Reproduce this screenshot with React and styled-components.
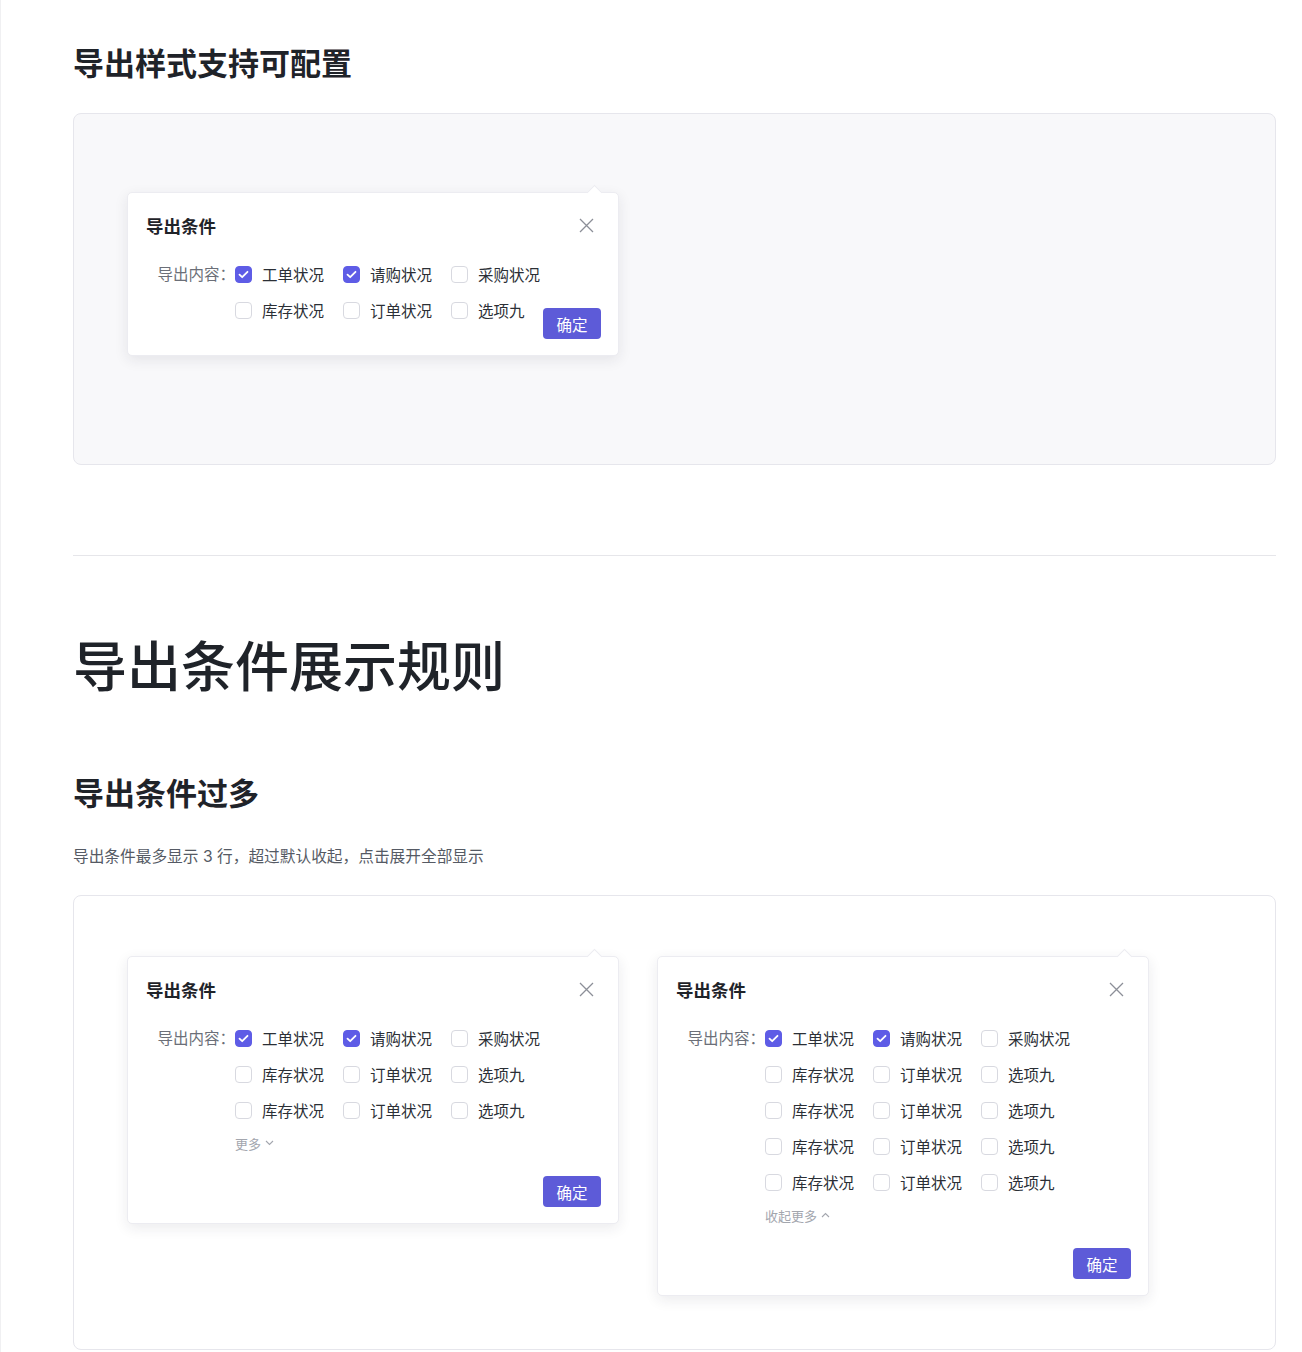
import React from 'react';
import styled, { createGlobalStyle } from 'styled-components';

const GlobalStyle = createGlobalStyle`
  * {
    box-sizing: border-box;
  }
  body {
    margin: 0;
    background: #fff;
    font-family: Inter, 'Noto Sans CJK SC', sans-serif;
    color: #1f2329;
  }
`;

const Page = styled.div`
  min-height: 100vh;
  border-left: 1px solid #f0f0f2;
  padding: 44px 26px 0 72px;
`;

const Title = styled.h2`
  margin: 0;
  font-size: 31px;
  line-height: 40px;
  font-weight: 600;
  color: #1f2329;
`;

const BigTitle = styled.h1`
  margin: 80px 0 0;
  font-size: 54px;
  line-height: 64px;
  font-weight: 500;
  color: #1f2329;
`;

const SubTitle = styled(Title)`
  margin-top: 74px;
`;

const Desc = styled.p`
  margin: 31px 0 0;
  font-size: 15.7px;
  line-height: 24px;
  color: #555a64;
`;

const Divider = styled.hr`
  margin: 90px 0 0;
  border: none;
  border-top: 1px solid #e6e6ea;
`;

const Canvas = styled.div`
  display: flex;
  align-items: flex-start;
  gap: 38px;
  margin-top: ${(p) => p.$mt}px;
  height: ${(p) => p.$h}px;
  padding: ${(p) => p.$pt}px 0 0 53px;
  border: 1px solid #e6e6ec;
  border-radius: 8px;
  background: ${(p) => (p.$grey ? '#f8f8fa' : '#fff')};
`;

const Popover = styled.div`
  position: relative;
  width: 492px;
  padding: 20px 17px 16px 18px;
  background: #fff;
  border: 1px solid #ececf1;
  border-radius: 5px;
  box-shadow: 0 4px 14px rgba(30, 30, 60, 0.09);

  &::before {
    content: '';
    position: absolute;
    top: -6px;
    right: 18px;
    width: 10px;
    height: 10px;
    background: #fff;
    border-top: 1px solid #ececf1;
    border-left: 1px solid #ececf1;
    transform: rotate(45deg);
  }
`;

const Header = styled.div`
  display: flex;
  align-items: center;
  justify-content: space-between;
  height: 24px;
`;

const PopTitle = styled.div`
  font-size: 17.5px;
  font-weight: 600;
  color: #1f2329;
`;

const Close = styled.button`
  display: flex;
  margin-right: 7px;
  padding: 0;
  border: none;
  background: none;
  cursor: pointer;
`;

const Body = styled.div`
  display: flex;
  align-items: flex-start;
  margin-top: 19px;
`;

const Label = styled.div`
  flex: none;
  width: 89px;
  padding-right: 0;
  height: 36px;
  line-height: 37px;
  text-align: right;
  font-size: 15.5px;
  color: #6b6f78;
`;

const Grid = styled.div`
  display: grid;
  grid-template-columns: 108px 108px auto;
  grid-auto-rows: 36px;
  flex: 1;
  padding-bottom: ${(p) => (p.$inline ? 11 : 0)}px;
`;

const Option = styled.label`
  display: flex;
  align-items: center;
  gap: 10px;
  font-size: 15.5px;
  color: #2b2f36;
  white-space: nowrap;
  cursor: pointer;
`;

const Box = styled.span`
  flex: none;
  display: flex;
  align-items: center;
  justify-content: center;
  width: 17px;
  height: 17px;
  border-radius: 4px;
  border: 1px solid ${(p) => (p.$checked ? '#5e5ce6' : '#d8d9e0')};
  background: ${(p) => (p.$checked ? '#5e5ce6' : '#fff')};
`;

const Side = styled.div`
  align-self: flex-end;
`;

const More = styled.div`
  display: flex;
  align-items: center;
  gap: 4px;
  margin: 5px 0 0 89px;
  height: 20px;
  font-size: 13px;
  color: #a3a6ae;
  cursor: pointer;
`;

const Footer = styled.div`
  display: flex;
  justify-content: flex-end;
  margin-top: 23px;
`;

const Button = styled.button`
  width: 58px;
  height: 31px;
  padding: 0;
  border: none;
  border-radius: 4px;
  background: #5d5bd8;
  color: #fff;
  font-family: inherit;
  font-size: 15.5px;
  cursor: pointer;
`;

const CloseIcon = () => (
  <svg width="15" height="15" viewBox="0 0 15 15" fill="none">
    <path d="M1 1 14 14M14 1 1 14" stroke="#8c8f98" strokeWidth="1.3" />
  </svg>
);

const Chevron = ({ up }) => (
  <svg width="9" height="6" viewBox="0 0 9 6" fill="none">
    <path d={up ? 'M1 5 4.5 1.5 8 5' : 'M1 1 4.5 4.5 8 1'} stroke="#a3a6ae" strokeWidth="1.1" />
  </svg>
);

const Check = () => (
  <svg width="11" height="9" viewBox="0 0 11 9" fill="none">
    <path d="M1.5 4.6 4.2 7.2 9.5 1.8" stroke="#fff" strokeWidth="1.8" strokeLinecap="round" strokeLinejoin="round" />
  </svg>
);

const firstRow = [
  { name: '工单状况', checked: true },
  { name: '请购状况', checked: true },
  { name: '采购状况', checked: false },
];
const extraRow = [
  { name: '库存状况', checked: false },
  { name: '订单状况', checked: false },
  { name: '选项九', checked: false },
];

const Checkbox = ({ name, checked }) => (
  <Option>
    <Box $checked={checked}>{checked && <Check />}</Box>
    {name}
  </Option>
);

function ExportPopover({ rows, more, inline }) {
  const items = [...firstRow];
  for (let i = 1; i < rows; i++) items.push(...extraRow);

  return (
    <Popover>
      <Header>
        <PopTitle>导出条件</PopTitle>
        <Close>
          <CloseIcon />
        </Close>
      </Header>
      <Body>
        <Label>导出内容：</Label>
        <Grid $inline={inline}>
          {items.map((it, i) => (
            <Checkbox key={i} {...it} />
          ))}
        </Grid>
        {inline && (
          <Side>
            <Button>确定</Button>
          </Side>
        )}
      </Body>
      {more && (
        <More>
          {more === 'expand' ? '更多' : '收起更多'}
          <Chevron up={more === 'collapse'} />
        </More>
      )}
      {!inline && (
        <Footer>
          <Button>确定</Button>
        </Footer>
      )}
    </Popover>
  );
}

export default function App() {
  return (
    <>
      <GlobalStyle />
      <Page>
        <Title>导出样式支持可配置</Title>
        <Canvas $grey $mt={29} $h={352} $pt={78}>
          <ExportPopover rows={2} inline />
        </Canvas>

        <Divider />

        <BigTitle>导出条件展示规则</BigTitle>
        <SubTitle>导出条件过多</SubTitle>
        <Desc>导出条件最多显示 3 行，超过默认收起，点击展开全部显示</Desc>
        <Canvas $mt={26} $h={455} $pt={60}>
          <ExportPopover rows={3} more="expand" />
          <ExportPopover rows={5} more="collapse" />
        </Canvas>
      </Page>
    </>
  );
}
